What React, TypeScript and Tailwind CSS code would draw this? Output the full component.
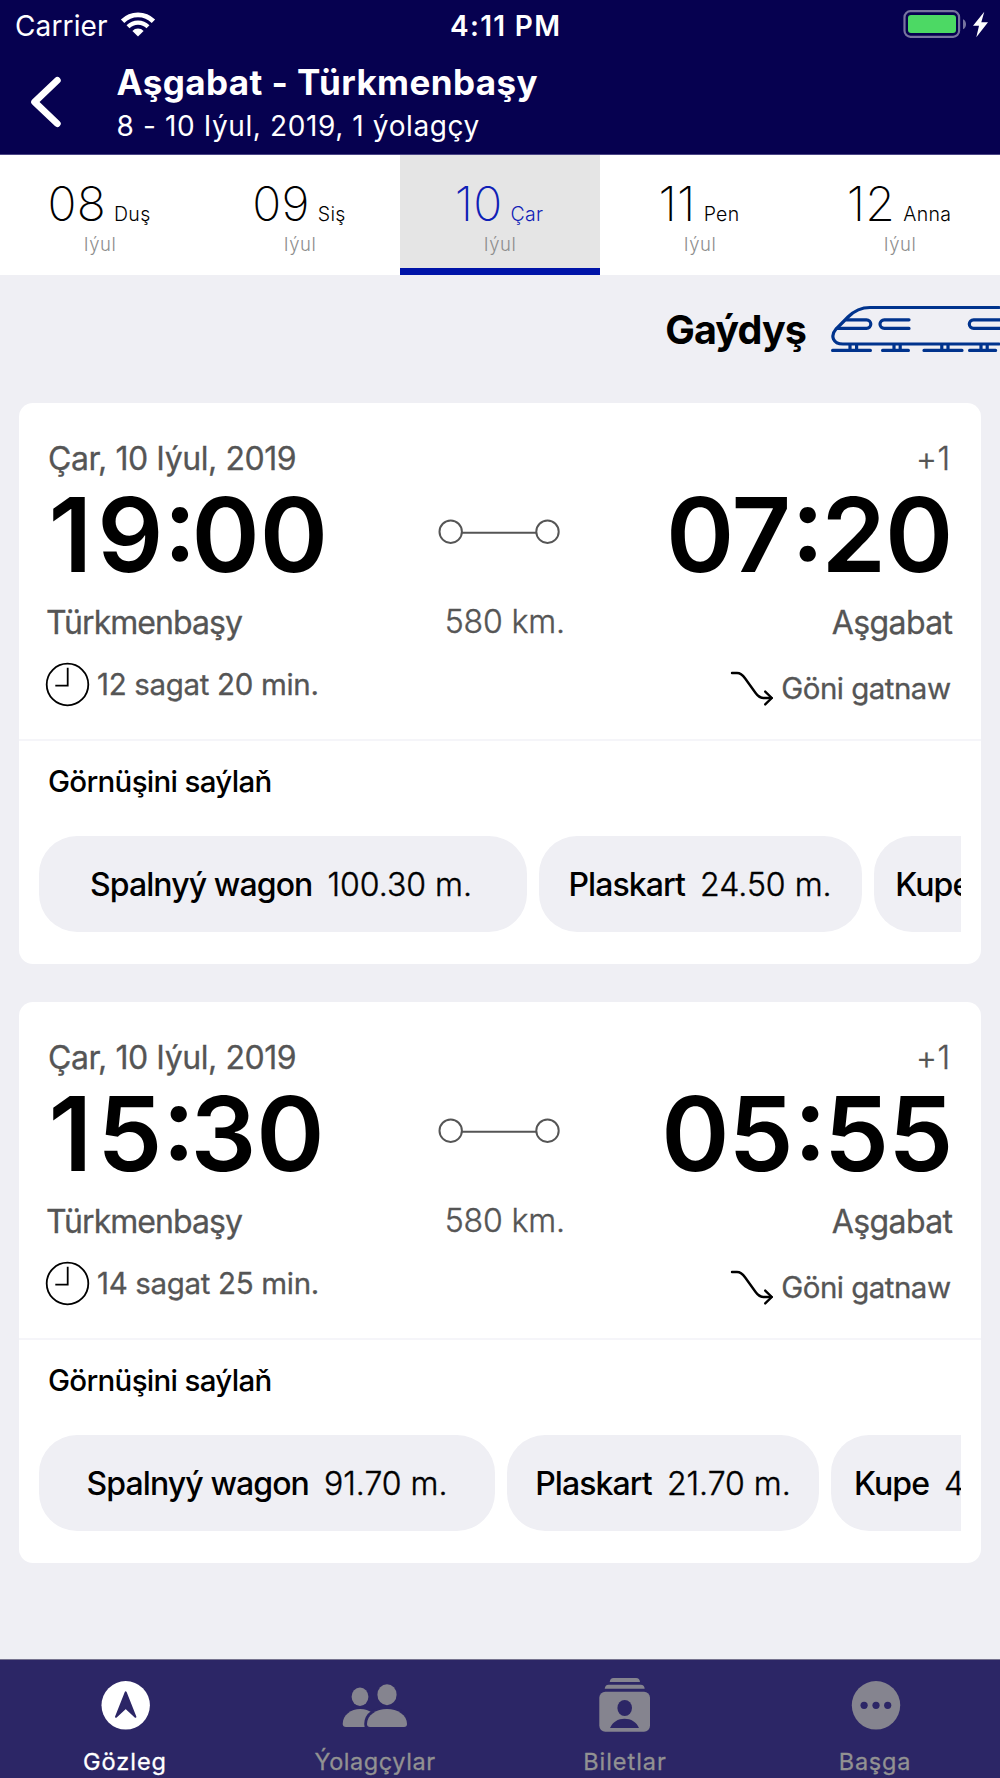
import React, { useState } from 'react';

interface Day {
  date: string;
  weekday: string;
}

interface Wagon {
  name: string;
  price: string;
  className: string;
}

interface Trip {
  departure: string;
  arrival: string;
  duration: string;
  wagons: Wagon[];
}

const DAYS: Day[] = [
  { date: '08', weekday: 'Duş' },
  { date: '09', weekday: 'Siş' },
  { date: '10', weekday: 'Çar' },
  { date: '11', weekday: 'Pen' },
  { date: '12', weekday: 'Anna' },
];

const TRIPS: Trip[] = [
  {
    departure: '19:00',
    arrival: '07:20',
    duration: '12 sagat 20 min.',
    wagons: [
      { name: 'Spalnyý wagon', price: '100.30 m.', className: 'w-[488px] pr-[4px]' },
      { name: 'Plaskart', price: '24.50 m.', className: 'w-[323px] pr-px' },
      { name: 'Kupe', price: '48.20 m.', className: 'w-[266px]' },
    ],
  },
  {
    departure: '15:30',
    arrival: '05:55',
    duration: '14 sagat 25 min.',
    wagons: [
      { name: 'Spalnyý wagon', price: '91.70 m.', className: 'w-[456px]' },
      { name: 'Plaskart', price: '21.70 m.', className: 'w-[312px]' },
      { name: 'Kupe', price: '42.60 m.', className: 'w-[269px]' },
    ],
  },
];

const TABS = [
  { label: 'Gözleg', icon: SearchTabIcon, tracking: 'tracking-[1px]' },
  { label: 'Ýolagçylar', icon: PeopleTabIcon, tracking: 'tracking-[0.55px]' },
  { label: 'Biletlar', icon: TicketsTabIcon, tracking: 'tracking-[0.95px]' },
  { label: 'Başga', icon: MoreTabIcon, tracking: 'tracking-[0.8px]' },
];

function WifiIcon() {
  return (
    <svg width="36" height="26" viewBox="0 0 36 26" fill="none">
      <path d="M2.6 10.3A21.8 21.8 0 0 1 33.4 10.3" stroke="#fff" strokeWidth="4.8" />
      <path d="M8 15.8A14.2 14.2 0 0 1 28 15.8" stroke="#fff" strokeWidth="4.2" />
      <path d="M12.4 19.9A8 8 0 0 1 23.6 19.9L18 25.5Z" fill="#fff" />
    </svg>
  );
}

function BatteryIcon() {
  return (
    <svg width="86" height="28" viewBox="0 0 86 28" fill="none">
      <rect x="1.5" y="1.2" width="54.6" height="25.6" rx="6" stroke="#77749f" strokeWidth="2.2" />
      <rect x="5" y="5" width="48" height="18" rx="3" fill="#4cd964" />
      <path d="M60 9.2C64 10.6 64 17.8 60 19.2Z" fill="#77749f" />
      <path d="M81.3 1.7L70 15.7H76L73.3 27.3L85 12.3H78.3Z" fill="#fff" />
    </svg>
  );
}

function BackIcon() {
  return (
    <svg width="32" height="52" viewBox="0 0 32 52" fill="none">
      <path d="M27.3 4.4L4.6 26L27.3 47.6" stroke="#fff" strokeWidth="6.8" strokeLinecap="round" strokeLinejoin="round" />
    </svg>
  );
}

function TrainIcon() {
  return (
    <svg width="169" height="48" viewBox="0 0 169 48" fill="none" stroke="#00338d" strokeWidth="3.2" strokeLinecap="round">
      <path d="M168 2.5H39C29 2.5 23 6 17 12L5 24C-1 31 2 39 12 39H168" />
      <path d="M15.5 14.8H35.5A4.3 4.3 0 0 1 35.5 23.4H6" />
      <path d="M78 14.8H53.3A4.3 4.3 0 0 0 53.3 23.4H78" />
      <path d="M170 14.8H142.6A4.3 4.3 0 0 0 142.6 23.4H170" />
      <path d="M1.6 45.4H39.4M51.6 45.4H77.4M93 45.4H131M138.6 45.4H164.6" />
      <path d="M19 39V45M25.6 39V45M63 39V45M69.2 39V45M110.8 39V45M117 39V45M150 39V45M156.2 39V45" strokeLinecap="butt" />
    </svg>
  );
}

function ClockIcon() {
  return (
    <svg width="45" height="45" viewBox="0 0 45 45" fill="none" stroke="#000">
      <circle cx="22.5" cy="22.5" r="20.8" strokeWidth="1.8" />
      <path d="M22.7 5.7V23.6H10.3" strokeWidth="1.8" />
    </svg>
  );
}

function DirectIcon() {
  return (
    <svg width="44" height="38" viewBox="0 0 44 38" fill="none" stroke="#000" strokeWidth="2.4" strokeLinecap="round" strokeLinejoin="round">
      <path d="M2 4H7C11 4 13.2 6.6 15 9.2L25.6 24C28 27.4 30.4 29 34 29H41.6" />
      <path d="M35.2 22.6L41.8 29L35.2 35.4" />
    </svg>
  );
}

function RouteLine() {
  return (
    <svg width="122" height="26" viewBox="0 0 122 26" fill="none" stroke="#555" strokeWidth="2">
      <circle cx="12.7" cy="12.7" r="11.2" />
      <path d="M23.9 13.7H98.3" />
      <circle cx="109.5" cy="12.7" r="11.2" />
    </svg>
  );
}

function SearchTabIcon() {
  return (
    <svg width="72" height="60" viewBox="0 0 72 60">
      <circle cx="36.7" cy="30.3" r="24.2" fill="#fff" />
      <path d="M36.7 17.4L46.4 41.8L36.7 32.8L27 41.8Z" fill="#2c2666" stroke="#2c2666" strokeWidth="2" strokeLinejoin="round" />
    </svg>
  );
}

function PeopleTabIcon() {
  return (
    <svg width="72" height="60" viewBox="0 0 72 60" fill="#85848f">
      <ellipse cx="21" cy="21.7" rx="8.4" ry="9.2" />
      <path d="M3.7 49C3.7 40 12 34 21.3 34C30.5 34 38 40 38 49C38 51 37 52 35 52H7C5 52 3.7 51 3.7 49Z" />
      <path d="M28 49C28 40 37.5 34 48 34C58.5 34 68 40 68 49C68 51 67 52 65 52H31C29 52 28 51 28 49Z" stroke="#2c2666" strokeWidth="5.6" paintOrder="stroke" />
      <ellipse cx="48" cy="19.7" rx="9.6" ry="10.5" />
    </svg>
  );
}

function TicketsTabIcon() {
  return (
    <svg width="72" height="60" viewBox="0 0 72 60" fill="#85848f">
      <path d="M20.7 6.9C21 4.5 22.3 3 24.5 3H47.2C49.4 3 50.7 4.5 51 6.9Z" />
      <path d="M15.7 13.7C16 11.3 17.3 9.7 19.5 9.7H51.9C54.1 9.7 55.4 11.3 55.7 13.7Z" />
      <rect x="10.3" y="16.7" width="50.7" height="40" rx="6" />
      <ellipse cx="35.7" cy="33" rx="7.3" ry="8" fill="#2c2666" />
      <path d="M21 53C23.5 47 29 43.7 35.5 43.7C42 43.7 47.5 47 50 53Z" fill="#2c2666" />
    </svg>
  );
}

function MoreTabIcon() {
  return (
    <svg width="72" height="60" viewBox="0 0 72 60">
      <circle cx="37" cy="30.3" r="24.2" fill="#85848f" />
      <circle cx="25.1" cy="30.3" r="3.6" fill="#2c2666" />
      <circle cx="37" cy="30.3" r="3.6" fill="#2c2666" />
      <circle cx="48.7" cy="30.3" r="3.6" fill="#2c2666" />
    </svg>
  );
}

function Header() {
  return (
    <header className="h-[155px] shrink-0 bg-[#060150] text-white border-b border-[#4b4585]">
      {/* Status bar */}
      <div className="flex h-[51px] items-center pl-[15px] pr-[11px] text-[28px] leading-none">
        <div className="flex w-[435px] items-center gap-[12px]">
          <span className="tracking-[0.13px]">Carrier</span>
          <div className="-mt-1"><WifiIcon /></div>
        </div>
        <span className="font-semibold tracking-[1.3px]">4:11 PM</span>
        <div className="-mt-[3px] ml-auto"><BatteryIcon /></div>
      </div>

      <div className="flex pl-[30px]">
        <button className="mt-[25px] h-[52px]">
          <BackIcon />
        </button>
        <div className="ml-[54.5px] mt-[9px] whitespace-nowrap">
          <h1 className="text-[35px] leading-[44px] font-bold tracking-[0.42px]">Aşgabat - Türkmenbaşy</h1>
          <p className="text-[28px] leading-[45px] tracking-[0.61px]">8 - 10 Iýul, 2019, 1 ýolagçy</p>
        </div>
      </div>
    </header>
  );
}

function TripCard({ trip }: { trip: Trip }) {
  const [depHours, depMinutes] = trip.departure.split(':');
  const [arrHours, arrMinutes] = trip.arrival.split(':');

  return (
    <section className="flex h-[560.5px] flex-col rounded-[14px] bg-white">
      <div className="grid h-[336px] grid-cols-[1fr_122px_1fr] whitespace-nowrap pl-[27px] pr-[28.5px] pt-[36px] text-[32px] leading-10 text-[#555]">
        {/* Departure */}
        <div>
          <p className="ml-0.5 tracking-[-0.43px] [-webkit-text-stroke:0.3px]">Çar, 10 Iýul, 2019</p>
          <p className="ml-[2.5px] text-[103.5px] leading-[112px] font-semibold text-black">
            <span className="tracking-[5px]">{depHours}</span>
            <span className="-mx-[5px] [font-feature-settings:'case']">:</span>
            {depMinutes}
          </p>
          <p className="mt-3 tracking-[-0.95px] [-webkit-text-stroke:0.3px]">Türkmenbaşy</p>
          <div className="mt-[19px] -ml-px flex h-11 items-center gap-[7px] text-[29.5px] tracking-[-0.33px] [-webkit-text-stroke:0.3px]">
            <ClockIcon />
            <span>{trip.duration}</span>
          </div>
        </div>

        <div className="flex flex-col items-center pt-[80px]">
          <RouteLine />
          <p className="ml-[11px] mt-[57px] font-light tracking-[-0.15px] [-webkit-text-stroke:0.4px]">580 km.</p>
        </div>

        {/* Arrival */}
        <div className="flex flex-col items-end">
          <p className="mr-0.5 font-light tracking-[0.5px] [-webkit-text-stroke:0.4px]">+1</p>
          <p className="text-[103.5px] leading-[112px] font-semibold tracking-[-0.85px] text-black">
            {arrHours}
            <span className="ml-px -mr-0.5 [font-feature-settings:'case']">:</span>
            {arrMinutes}
          </p>
          <p className="mt-3 tracking-[-0.6px] [-webkit-text-stroke:0.3px]">Aşgabat</p>
          <div className="mt-[23px] mr-0.5 flex h-11 items-center gap-[7px] text-[29.5px] tracking-[-0.53px] [-webkit-text-stroke:0.3px]">
            <DirectIcon />
            <span>Göni gatnaw</span>
          </div>
        </div>
      </div>

      {/* Wagon types */}
      <div className="border-t-2 border-[#f5f5f9] pt-5">
        <h3 className="ml-[29px] text-[29.5px] leading-10 font-medium tracking-[-0.7px]">Görnüşini saýlaň</h3>
        <div className="mx-5 mt-[35px] flex gap-3 overflow-hidden">
          {trip.wagons.map(wagon => (
            <button
              key={wagon.name}
              className={`flex h-24 shrink-0 items-center justify-center gap-[15px] whitespace-nowrap rounded-[38px] bg-[#efeff4] pt-0.5 text-[32px] ${wagon.className}`}
            >
              <span className="font-medium tracking-[-0.9px]">{wagon.name}</span>
              <span className="font-light [-webkit-text-stroke:0.4px]">{wagon.price}</span>
            </button>
          ))}
        </div>
      </div>
    </section>
  );
}

export default function App() {
  const [selectedDate, setSelectedDate] = useState('10');
  const [activeTab, setActiveTab] = useState('Gözleg');

  return (
    <div className="flex h-[1778px] w-[1000px] flex-col overflow-hidden bg-[#efeff4] font-['Inter',sans-serif] text-black">
      <Header />

      {/* Dates */}
      <div className="grid h-[120px] shrink-0 grid-cols-5 bg-white">
        {DAYS.map(day => (
          <button
            key={day.date}
            data-active={selectedDate === day.date}
            onClick={() => setSelectedDate(day.date)}
            className="flex flex-col items-center border-b-[7px] border-transparent pt-[25px] data-[active=true]:border-[#0014a8] data-[active=true]:bg-[#e5e5e5] data-[active=true]:text-[#0f20b6]"
          >
            <span className="-ml-[2px] flex h-12 items-baseline gap-[8px]">
              <span className="text-[48px] leading-[48px] font-extralight tracking-[0.3px]">{day.date}</span>
              <span className="text-[19.5px] leading-6 font-light tracking-[0.3px]">{day.weekday}</span>
            </span>
            <span className="mt-1 text-[18.5px] leading-6 font-light tracking-[0.5px] text-[#8e8e8e]">Iýul</span>
          </button>
        ))}
      </div>

      <div className="mb-[20.5px] flex h-[107.5px] shrink-0 items-center justify-end gap-[25px]">
        <h2 className="pt-[3px] text-[39.5px] leading-none font-bold tracking-[-0.9px]">Gaýdyş</h2>
        <TrainIcon />
      </div>

      <main className="flex flex-1 flex-col gap-[38.8px] pl-[19px] pr-[19px]">
        {TRIPS.map(trip => (
          <TripCard key={trip.departure} trip={trip} />
        ))}
      </main>

      {/* Tab bar */}
      <nav className="grid h-[119px] shrink-0 grid-cols-4 border-t border-[#77748f] bg-[#2c2666]">
        {TABS.map(({ label, icon: Icon, tracking }) => (
          <button
            key={label}
            data-active={activeTab === label}
            onClick={() => setActiveTab(label)}
            className="flex flex-col items-center pt-[15px] text-[#929292] data-[active=true]:text-white"
          >
            <Icon />
            <span className={`mt-[13px] text-[23.5px] leading-7 [-webkit-text-stroke:0.3px] ${tracking}`}>{label}</span>
          </button>
        ))}
      </nav>
    </div>
  );
}
